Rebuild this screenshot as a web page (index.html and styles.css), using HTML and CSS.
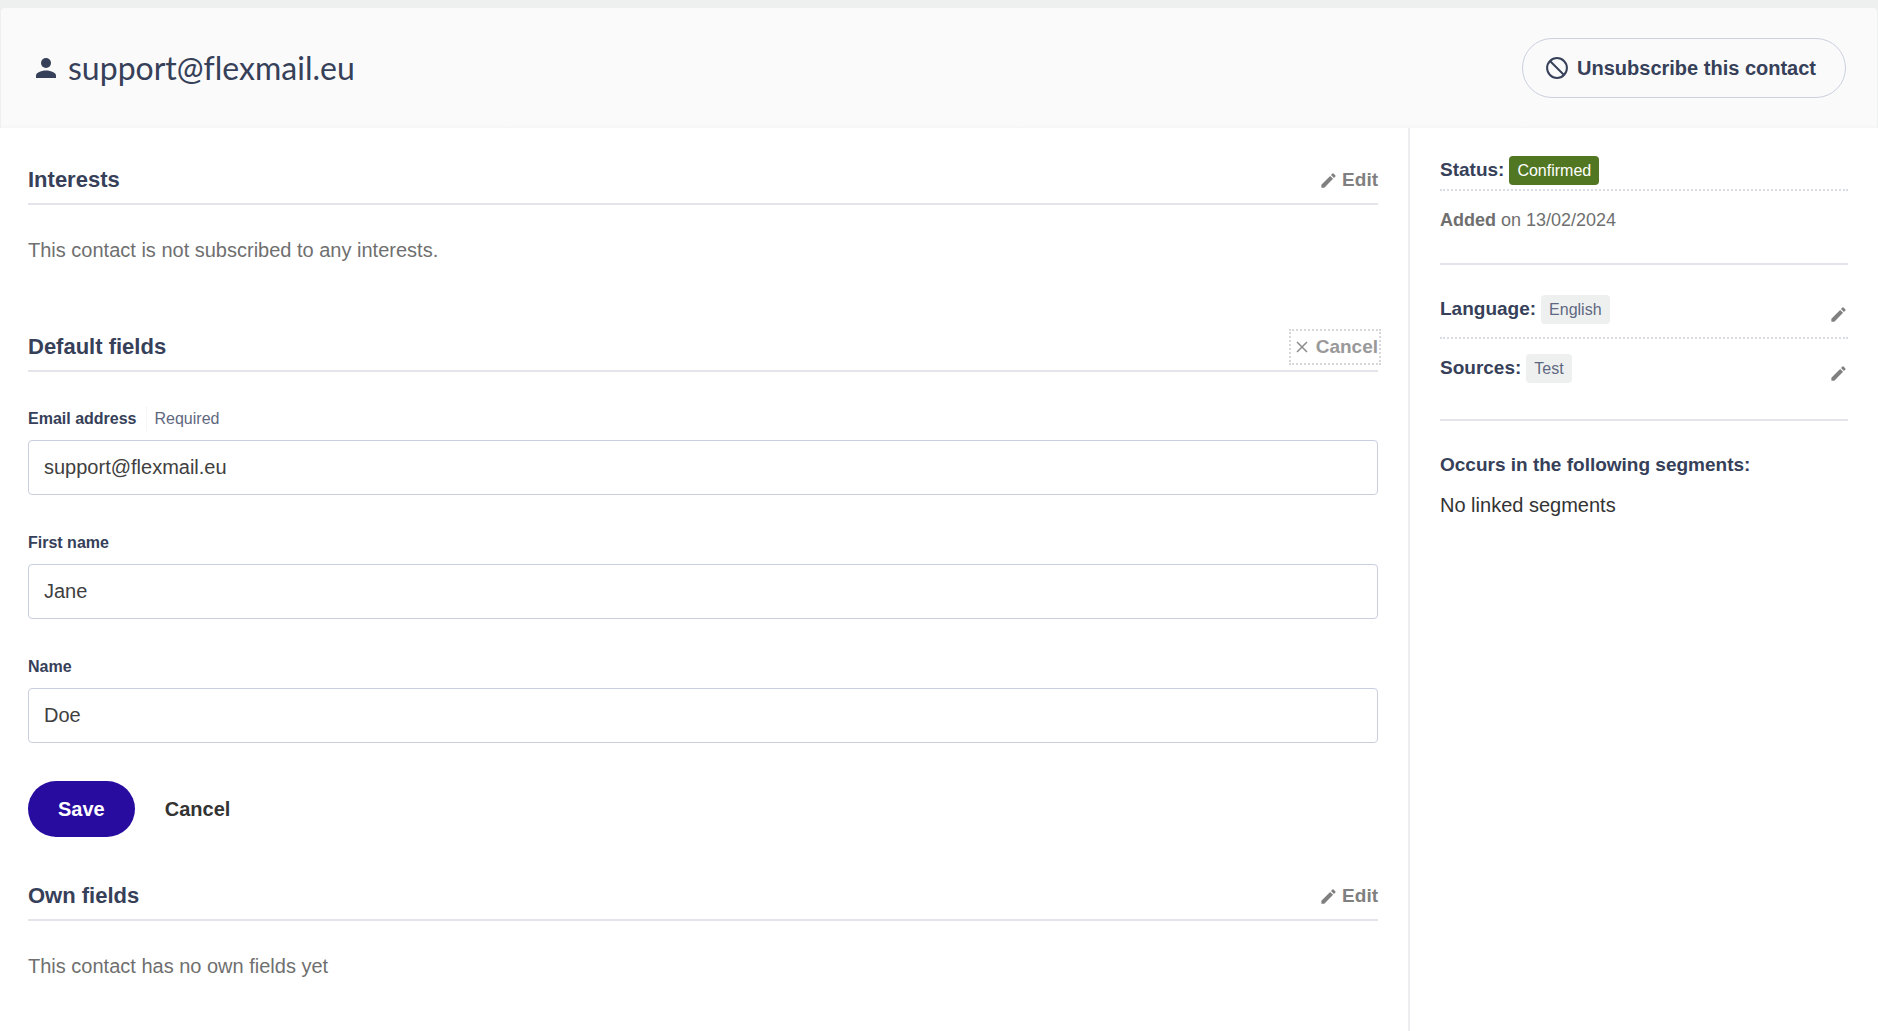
FILE: index.html
```html
<!DOCTYPE html>
<html lang="en">
<head>
  <meta charset="UTF-8">
  <meta name="viewport" content="width=device-width, initial-scale=1.0">
  <title>Contact - support@flexmail.eu</title>
  <link rel="stylesheet" href="styles.css">
</head>
<body>
  <svg class="sprite" aria-hidden="true">
    <symbol id="icon-pencil" viewBox="0 0 24 24">
      <path d="M3 17.25V21h3.75L17.81 9.94l-3.75-3.75L3 17.25zM20.71 7.04a1 1 0 0 0 0-1.41l-2.34-2.34a1 1 0 0 0-1.41 0l-1.83 1.83 3.75 3.75 1.83-1.83z"/>
    </symbol>
  </svg>

  <header class="page-header">
    <h1 class="page-title">
      <svg class="icon-person" viewBox="0 0 20 20" aria-hidden="true">
        <circle cx="10" cy="5" r="5"/>
        <path d="M0 20v-2.500C0 14.200 6.600 12.500 10 12.500s10 1.700 10 5V20z"/>
      </svg>
      support@flexmail.eu
    </h1>
    <button class="btn btn-outline" type="button">
      <svg class="icon-ban" viewBox="0 0 22 22" aria-hidden="true">
        <circle cx="11" cy="11" r="9.900"/>
        <path d="M4 4l14 14"/>
      </svg>
      Unsubscribe this contact
    </button>
  </header>

  <div class="layout">
    <main class="content">
      <section class="section">
        <div class="section-head">
          <h2>Interests</h2>
          <button class="btn-link" type="button"><svg class="icon-pencil" aria-hidden="true"><use href="#icon-pencil"/></svg>Edit</button>
        </div>
        <p class="section-text">This contact is not subscribed to any interests.</p>
      </section>

      <section class="section section-form">
        <div class="section-head">
          <h2>Default fields</h2>
          <button class="btn-link is-focused" type="button"><svg class="icon-close" viewBox="0 0 12 12" aria-hidden="true"><path d="M1 1l10 10M11 1L1 11"/></svg>Cancel</button>
        </div>
        <form class="form">
          <div class="field">
            <div class="field-label">
              <label for="email">Email address</label>
              <span class="required">Required</span>
            </div>
            <input id="email" type="text" value="support@flexmail.eu">
          </div>
          <div class="field">
            <div class="field-label">
              <label for="first-name">First name</label>
            </div>
            <input id="first-name" type="text" value="Jane">
          </div>
          <div class="field">
            <div class="field-label">
              <label for="name">Name</label>
            </div>
            <input id="name" type="text" value="Doe">
          </div>
          <div class="form-actions">
            <button class="btn btn-primary" type="button">Save</button>
            <button class="btn btn-plain" type="button">Cancel</button>
          </div>
        </form>
      </section>

      <section class="section">
        <div class="section-head">
          <h2>Own fields</h2>
          <button class="btn-link" type="button"><svg class="icon-pencil" aria-hidden="true"><use href="#icon-pencil"/></svg>Edit</button>
        </div>
        <p class="section-text">This contact has no own fields yet</p>
      </section>
    </main>

    <aside class="sidebar">
      <div class="group">
        <div class="status">
          <h3>Status:</h3>
          <span class="tag tag-success">Confirmed</span>
        </div>
        <p class="added"><strong>Added</strong> on 13/02/2024</p>
      </div>
      <div class="group">
        <div class="row">
          <h3>Language:</h3>
          <span class="tag">English</span>
          <button class="btn-icon" type="button" aria-label="Edit language"><svg class="icon-pencil" aria-hidden="true"><use href="#icon-pencil"/></svg></button>
        </div>
        <div class="row">
          <h3>Sources:</h3>
          <span class="tag">Test</span>
          <button class="btn-icon" type="button" aria-label="Edit sources"><svg class="icon-pencil" aria-hidden="true"><use href="#icon-pencil"/></svg></button>
        </div>
      </div>
      <div class="group">
        <h3>Occurs in the following segments:</h3>
        <p class="segments">No linked segments</p>
      </div>
    </aside>
  </div>
</body>
</html>
```
FILE: styles.css
```css
* {
  margin: 0;
  padding: 0;
  box-sizing: border-box;
}
body {
  display: flex;
  flex-direction: column;
  min-height: 100vh;
  padding-top: 8px;
  background: #eef0f0;
  color: #333;
  font-family: "Liberation Sans", Arial, sans-serif;
  font-size: 20px;
  line-height: 30px;
}
button, input {
  font: inherit;
}
button {
  border: 0;
  background: none;
  cursor: pointer;
}
h1, h2, h3, label {
  color: #364059;
}
.sprite {
  display: none;
}

/* header */
.page-header {
  display: flex;
  align-items: center;
  justify-content: space-between;
  margin: 0 1px;
  padding: 30px 31px 30px 35px;
  background: linear-gradient(#fafafa 97%, #f6f6f6);
  border-radius: 4px 4px 0 0;
}
.page-title {
  display: flex;
  align-items: center;
  gap: 12px;
  font-family: Lato, sans-serif;
  font-size: 32px;
  font-weight: 400;
  font-variant-ligatures: none;
  line-height: 40px;
}
.icon-person {
  width: 20px;
  height: 20px;
  fill: #364059;
}

/* buttons */
.btn {
  display: flex;
  align-items: center;
  border-radius: 30px;
  font-weight: 700;
}
.btn-outline {
  gap: 9px;
  height: 60px;
  padding: 0 29px 0 23px;
  border: 1px solid #cbd0df;
  color: #364059;
}
.icon-ban {
  width: 22px;
  height: 22px;
  fill: none;
  stroke: #364059;
  stroke-width: 2;
}
.btn-primary {
  height: 56px;
  padding: 0 30px;
  background: #280b9f;
  color: #fff;
}
.btn-plain {
  color: #333;
}
.btn-link {
  display: flex;
  align-items: center;
  gap: 4px;
  color: #808080;
  font-size: 19px;
  font-weight: 700;
}
.btn-link.is-focused {
  gap: 8px;
  padding-left: 4px;
  outline: 2px dotted #d8d8d8;
  outline-offset: 1px;
  color: #999;
}
.icon-pencil {
  width: 19px;
  height: 19px;
  fill: #808080;
}
.icon-close {
  width: 12px;
  height: 12px;
  fill: none;
  stroke: #8c8c8c;
  stroke-width: 1.5;
}

/* columns */
.layout {
  display: grid;
  grid-template-columns: minmax(0, 1fr) 470px;
  flex: 1;
  background: #fff;
}
.content {
  display: flex;
  flex-direction: column;
  padding: 37px 30px 37px 28px;
}
.section {
  margin-bottom: 67px;
}
.section-form {
  margin-bottom: 44px;
}
.section:last-child {
  margin-bottom: 0;
}
.section-head {
  display: flex;
  align-items: center;
  justify-content: space-between;
  padding-bottom: 8px;
  border-bottom: 2px solid #e4e5eb;
}
.section-head h2 {
  font-size: 22px;
}
.section-text {
  margin-top: 30px;
  color: #6f6f6f;
}

/* form */
.form {
  display: flex;
  flex-direction: column;
  gap: 36px;
  padding-top: 35px;
}
.field-label {
  display: flex;
  margin-bottom: 9px;
  font-size: 16px;
  line-height: 24px;
}
.field-label label {
  font-weight: 700;
}
.required {
  margin-left: 9px;
  padding-left: 8px;
  border-left: 1px dotted #eef0f0;
  color: #5f6880;
}
.field input {
  display: block;
  width: 100%;
  height: 55px;
  padding: 0 15px;
  border: 1px solid #c9cfdf;
  border-radius: 4px;
  background: #fff;
  color: #404040;
}
.form-actions {
  display: flex;
  align-items: center;
  gap: 30px;
  padding-top: 2px;
}

/* sidebar */
.sidebar {
  padding: 28px 30px;
  border-left: 2px solid #ededf0;
}
.sidebar h3 {
  font-size: 19px;
  line-height: 27px;
}
.group + .group {
  margin-top: 28px;
  padding-top: 30px;
  border-top: 2px solid #e4e5eb;
}
.status, .row {
  display: flex;
  gap: 5px;
}
.status {
  padding-bottom: 4px;
  border-bottom: 2px dotted #d9dbe7;
}
.added {
  margin-top: 14px;
  color: #6f6f6f;
  font-size: 18px;
}
.row + .row {
  margin-top: 13px;
  padding: 15px 0 8px;
  border-top: 2px dotted #d9dbe7;
}
.tag {
  padding: 0 8px;
  border-radius: 4px;
  background: #eef0f0;
  color: #5f6880;
  font-size: 16px;
  line-height: 29px;
}
.tag-success {
  background: #527722;
  color: #fff;
}
.btn-icon {
  display: flex;
  align-items: flex-end;
  margin-left: auto;
}
.segments {
  margin-top: 12px;
}
```
